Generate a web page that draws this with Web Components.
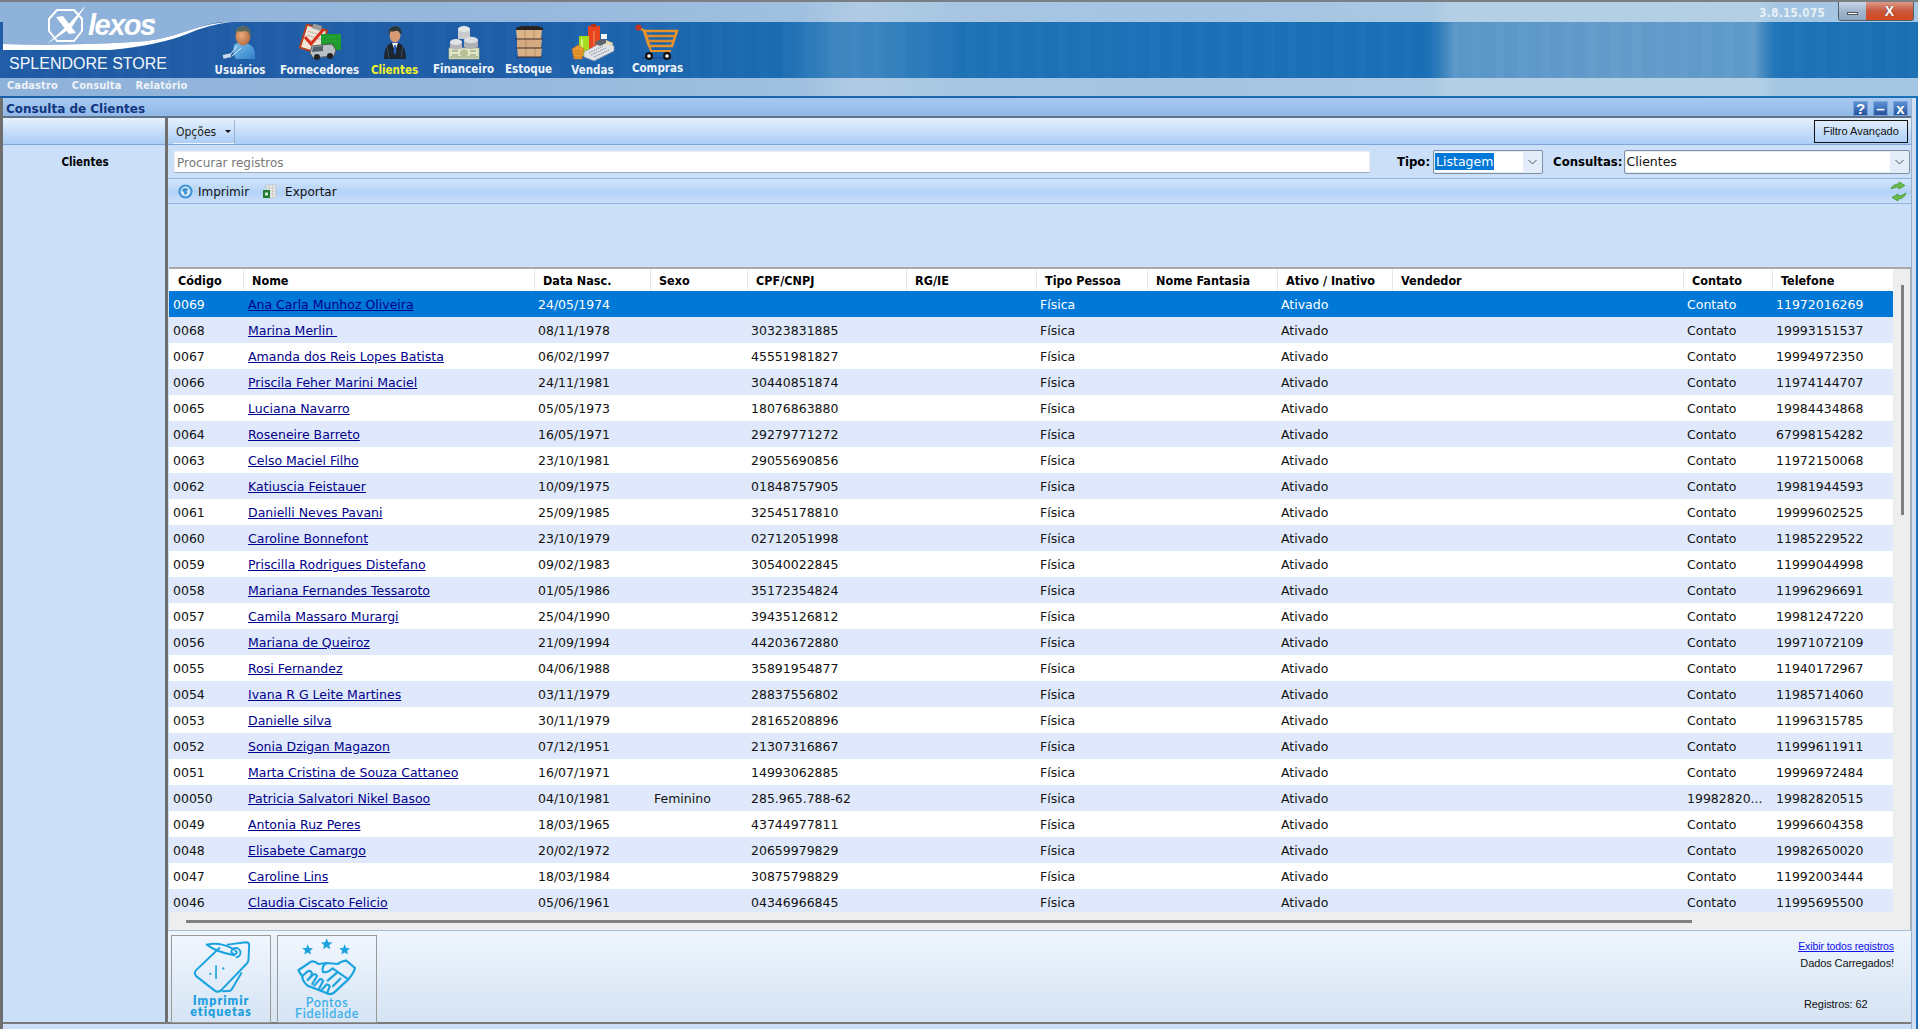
<!DOCTYPE html>
<html lang="pt-BR">
<head>
<meta charset="utf-8">
<title>Consulta de Clientes</title>
<style>
  html, body { margin: 0; padding: 0; background: #cbdff8; overflow: hidden; }
</style>
</head>
<body>
<lexos-app>
  <lexos-header slot="header" version="3.8.15.075" store="SPLENDORE STORE">
    <nav-item label="Usuários" width="80">
      <svg width="36" height="37" viewBox="0 0 36 37">
        <defs>
          <linearGradient id="uShirt" x1="0" y1="0" x2="1" y2="1"><stop offset="0" stop-color="#7cc0ee"/><stop offset="1" stop-color="#2f7fc6"/></linearGradient>
          <radialGradient id="uSkin" cx=".4" cy=".45" r=".7"><stop offset="0" stop-color="#eeab7c"/><stop offset="1" stop-color="#a8623a"/></radialGradient>
        </defs>
        <path d="M12 21 Q15 18 24 19 Q32 21 33 29 L33 35 L14 35 Q10 30 12 21Z" fill="url(#uShirt)"/>
        <ellipse cx="21" cy="12" rx="7.5" ry="9.5" fill="url(#uSkin)"/>
        <path d="M13 11 Q13 2 21 2 Q29 2 29 11 L28 13 Q27 7 23 7 Q17 8 15 7 Q14 9 14 13Z" fill="#586860"/>
        <path d="M15 22 L8 31 M19 24 L10 32" stroke="#dfeaf5" stroke-width="1"/>
        <rect x="1" y="30" width="8" height="4" fill="#c9d8e6" transform="rotate(-12 5 32)"/>
      </svg>
    </nav-item>
    <nav-item label="Fornecedores" width="79">
      <svg width="42" height="37" viewBox="0 0 42 37">
        <g transform="rotate(17 14 15)">
          <rect x="4" y="3" width="21" height="24" fill="#f0e6d8" stroke="#b8401c" stroke-width="2"/>
          <rect x="10" y="0" width="9" height="5" fill="#9a9a9a"/>
          <path d="M7 9h15M7 13h15M7 17h10" stroke="#c8b8a8"/>
        </g>
        <rect x="22" y="10" width="20" height="16" fill="#1f9a2e"/>
        <path d="M24 13h16M24 17h16" stroke="#3ec24c" stroke-dasharray="1 2"/>
        <path d="M6 13 L12 20 L24 6" fill="none" stroke="#d8301c" stroke-width="3"/>
        <path d="M13 22 L33 20 L37 26 L35 32 L14 34 L11 29Z" fill="#b9c0c6" stroke="#555"/>
        <path d="M14 23 L24 22 L24 27 L13 28Z" fill="#50606c"/>
        <circle cx="18" cy="33" r="3" fill="#222"/><circle cx="31" cy="32" r="3" fill="#222"/>
      </svg>
    </nav-item>
    <nav-item label="Clientes" width="71" active>
      <svg width="24" height="37" viewBox="0 0 24 37">
        <path d="M1 35 Q1 22 8 19 L16 19 Q23 22 23 35Z" fill="#1c2630"/>
        <path d="M9 19 L12 27 L15 19Z" fill="#f2f2f2"/>
        <path d="M11.2 21 L12.8 21 L13.4 28 L12 31 L10.6 28Z" fill="#2a62c0"/>
        <ellipse cx="12" cy="11" rx="5.5" ry="7.5" fill="#d89a72"/>
        <path d="M5.5 9 Q6 2 13 2 Q19 3 18.5 10 L17 10 Q16 6 12 7 Q9 8 7 7 L7 11Z" fill="#2e3838"/>
        <path d="M4 22 L6 34 M20 22 L18 34" stroke="#3d4a56"/>
      </svg>
    </nav-item>
    <nav-item label="Financeiro" width="67" offset="-1">
      <svg width="32" height="37" viewBox="0 0 32 37">
        <rect x="1" y="24" width="30" height="11" fill="#e4e6ca" stroke="#a8ac8a" stroke-width=".7"/>
        <path d="M2 33h28" stroke="#8aa070"/>
        <ellipse cx="16" cy="29" rx="4" ry="3.5" fill="#b6bf94"/>
        <path d="M4 27h6M22 27h6M4 31h6M22 31h6" stroke="#7f9568"/>
        <path d="M10 5 Q16 1 22 5 L22 15 L10 15Z" fill="#c8cacd"/>
        <ellipse cx="16" cy="5" rx="6" ry="3" fill="#e4e5e8"/>
        <path d="M2 18 Q8 13 14 18 L14 24 Q8 27 2 24Z" fill="#b4b6ba"/>
        <ellipse cx="8" cy="18" rx="6" ry="3" fill="#e2e3e6"/>
        <path d="M16 16 Q23 11 30 16 L30 23 Q23 27 16 23Z" fill="#aeb0b4"/>
        <ellipse cx="23" cy="16" rx="7" ry="3.2" fill="#dcdde0"/>
      </svg>
    </nav-item>
    <nav-item label="Estoque" width="63" offset="-1">
      <svg width="30" height="37" viewBox="0 0 30 37">
        <path d="M2 4 L7 2 L24 2 L29 4 L29 6 L2 6Z" fill="#26221e"/>
        <path d="M2 6 H28 L27 15 H3Z" fill="#dcb48a"/>
        <path d="M3 15 H28 L27 24 H3Z" fill="#d6aa80"/>
        <path d="M3 24 H28 L27 33 H4Z" fill="#dab088"/>
        <path d="M11 6v9M20 6v9M12 15v9M12 24v9M21 24v9" stroke="#a88458" stroke-width=".7"/>
        <path d="M1 15 H29 M2 24 H28 M3 33 H28" stroke="#3a2c24" stroke-width="1.1"/>
      </svg>
    </nav-item>
    <nav-item label="Vendas" width="65">
      <svg width="45" height="37" viewBox="0 0 45 37">
        <rect x="18" y="2" width="12" height="24" fill="#e8441e"/>
        <rect x="21" y="0" width="5" height="3" fill="#b8301a"/>
        <path d="M24 7v14" stroke="#f59a58"/>
        <rect x="9" y="12" width="10" height="20" rx="1" fill="#a6dc1e"/>
        <path d="M12 15v14" stroke="#d8f080" stroke-width="2"/>
        <path d="M2 25 L8 21 L14 25 L12 35 L4 35Z" fill="#e89a30" stroke="#b86c18" stroke-width=".6"/>
        <path d="M4 27h8M4 30h8M4 33h8" stroke="#c87e20"/>
        <path d="M14 28 L34 17 L44 22 L44 27 L24 37 L14 33Z" fill="#dfe2e6" stroke="#8c9096" stroke-width=".6"/>
        <path d="M24 19 L32 14 L38 18 L30 22Z" fill="#5e646c"/>
        <rect x="31" y="10" width="6" height="5" fill="#f4f4f4"/>
        <path d="M19 29 L33 22 M21 31 L36 24 M24 33 L39 26" stroke="#8c9096" stroke-dasharray="1.5 1"/>
        <path d="M36 16 L43 19 L42 22 L36 20Z" fill="#e8d8a8"/>
      </svg>
    </nav-item>
    <nav-item label="Compras" width="65" offset="-2" shift="-1">
      <svg width="44" height="37" viewBox="0 0 44 37">
        <path d="M4 4 L10 7 L16 27 L36 27" fill="none" stroke="#e8932c" stroke-width="2"/>
        <path d="M9 7 H42 L37 22 H14Z" fill="none" stroke="#e8932c" stroke-width="2.5"/>
        <path d="M11 12 H40 M13 17 H38" stroke="#e08a28" stroke-width="2.5"/>
        <circle cx="3.5" cy="3.5" r="3" fill="#c8341c"/>
        <path d="M6 34 H38" stroke="#2a4a96" stroke-width="1.5"/>
        <circle cx="14" cy="32" r="4" fill="#111"/><circle cx="14" cy="32" r="1.8" fill="#fff"/>
        <circle cx="32" cy="32" r="4" fill="#111"/><circle cx="32" cy="32" r="1.8" fill="#fff"/>
      </svg>
    </nav-item>
  </lexos-header>
  <client-window slot="window" title="Consulta de Clientes"></client-window>
</lexos-app>

<script>
const UI_FONT = `"DejaVu Sans Condensed", "Liberation Sans", sans-serif`;
const GRID_FONT = `"DejaVu Sans", Verdana, sans-serif`;
const COLS = '74px 291px 116px 97px 159px 130px 111px 130px 115px 291px 89px 121px';

class LexosApp extends HTMLElement {
  constructor() {
    super();
    this.attachShadow({ mode: 'open' });
    this.shadowRoot.innerHTML = `
      <style>
        :host {
          display: flex;
          flex-direction: column;
          width: 1918px;
          height: 1029px;
          overflow: hidden;
          background: #cbdff8;
        }
      </style>
      <slot name="header"></slot>
      <slot name="window"></slot>
    `;
  }
}

class NavItem extends HTMLElement {
  constructor() {
    super();
    this.attachShadow({ mode: 'open' });
  }

  connectedCallback() {
    const active = this.hasAttribute('active');
    const offset = this.getAttribute('offset') || 0;
    this.shadowRoot.innerHTML = `
      <style>
        :host {
          display: flex;
          flex-direction: column;
          align-items: center;
          width: ${this.getAttribute('width')}px;
          flex: none;
        }
        .icon {
          height: 37px;
          display: flex;
          justify-content: center;
          align-items: flex-start;
          margin-top: 2px;
          margin-left: ${this.getAttribute('shift') || 0}px;
        }
        span {
          margin-top: ${2 + Number(offset)}px;
          font: bold 11.5px/14px ${UI_FONT};
          color: ${active ? '#f4f42a' : '#eef3f8'};
          white-space: nowrap;
        }
      </style>
      <div class="icon"><slot></slot></div>
      <span>${this.getAttribute('label')}</span>
    `;
  }
}

class LexosHeader extends HTMLElement {
  constructor() {
    super();
    this.attachShadow({ mode: 'open' });
  }

  connectedCallback() {
    const light = 'linear-gradient(90deg, #8fb2da 0, #97b8dc 500px, #a0c0e0 800px, #b0cce4 860px, #a8c6e2 950px, #a4c4e2 1200px, #a9c8e3 1430px, #b4d0e7 1450px, #b2cfe6 1760px, #a6c7e3 1775px, #a4c6e3 100%)';
    this.shadowRoot.innerHTML = `
      <style>
        :host { display: block; position: relative; height: 98px; flex: none; }
        .top {
          height: 20px;
          border-top: 2px solid #7b7f84;
          background: ${light};
          display: flex;
          justify-content: flex-end;
          align-items: flex-start;
        }
        .version {
          font: bold 11.5px/20px ${UI_FONT};
          letter-spacing: .35px;
          color: #e8f0f7;
          margin: 1px 13px 0 0;
        }
        .winbtns {
          display: flex;
          height: 18px;
          margin-right: 4px;
          border: 1px solid #50606f;
          border-top: none;
          border-radius: 0 0 3px 3px;
          overflow: hidden;
        }
        .winbtns div { display: flex; align-items: center; justify-content: center; }
        .min { width: 27px; background: linear-gradient(#c8d6e6, #a2b6cc 50%, #8ea6c2); }
        .min i { width: 11px; height: 3px; background: #fff; border: 1px solid #555; box-sizing: border-box; margin-top: 4px; }
        .close { width: 47px; background: linear-gradient(#dc9a88, #c9573c 50%, #d8481c); color: #fff; font: bold 14px/14px "Liberation Sans", sans-serif; text-shadow: 0 0 1px #333; }
        .blue {
          height: 56px;
          background:
            repeating-linear-gradient(90deg, rgba(255,255,255,.012) 0 9px, rgba(0,0,0,.01) 9px 23px),
            linear-gradient(90deg, #1f5ca6 0, #1f5fa9 500px, #1a6cb3 780px, #4088c2 840px, #3a84c0 880px, #1f72b8 960px, #1a70b6 1430px, #5b98c9 1455px, #649dcc 1620px, #5f9bca 1755px, #1f74b8 1775px, #1a70b5 100%);
          display: flex;
          padding-left: 200px;
          box-sizing: border-box;
        }
        .menu {
          height: 18px;
          background: ${light};
          display: flex;
          gap: 14px;
          padding-left: 7px;
          font: bold 11px/15px ${UI_FONT};
          letter-spacing: .1px;
          color: #eef3f8;
        }
        .rule { height: 2px; background: linear-gradient(90deg, #1d5ea8, #1a70b6); }
        .swoosh { position: absolute; left: 0; top: 0; }
        .lexos {
          position: absolute;
          left: 88px;
          top: 7px;
          font: italic bold 29px/36px "Liberation Sans", sans-serif;
          letter-spacing: -1.5px;
          color: #fff;
        }
        .reg { position: absolute; left: 151px; top: 17px; font: 6px/8px "Liberation Sans", sans-serif; color: #fff; }
        .store {
          position: absolute;
          left: 9px;
          top: 53px;
          font: 16px/22px "Liberation Sans", sans-serif;
          color: #f2f6fb;
          white-space: nowrap;
        }
      </style>
      <div class="top">
        <div class="version">${this.getAttribute('version')}</div>
        <div class="winbtns">
          <div class="min"><i></i></div>
          <div class="close">X</div>
        </div>
      </div>
      <div class="blue"><slot></slot></div>
      <div class="menu"><span>Cadastro</span><span>Consulta</span><span>Relatório</span></div>
      <div class="rule"></div>
      <svg class="swoosh" width="240" height="54" viewBox="0 0 240 54">
        <path d="M3 2 H240 V21 H230 Q213 22 187 31 Q160 41 133 42 Q60 46 3 44Z" fill="#8fb2da"/>
        <path d="M3 44 Q60 46 133 42 Q160 41 187 31 Q213 22 232 22 Q210 24 187 34 Q160 45 110 50 H3Z" fill="#fff"/>
        <path d="M57 10 L74 10 L82 19 L82 31 L74 41 L57 41 L49 31 L49 19Z" fill="none" stroke="#fff" stroke-width="2" stroke-linejoin="round"/>
        <path d="M47 44 L68 25 L86 5 L72 27 L62 34Z" fill="#fff"/>
        <path d="M56 17 L63 16 L76 33 L69 34Z" fill="#fff"/>
      </svg>
      <div class="lexos">lexos</div>
      <div class="reg">®</div>
      <div class="store">${this.getAttribute('store')}</div>
    `;
  }
}

class LxCombo extends HTMLElement {
  constructor() {
    super();
    this.attachShadow({ mode: 'open' });
  }

  connectedCallback() {
    this.shadowRoot.innerHTML = `
      <style>
        :host {
          display: flex;
          align-items: center;
          height: 24px;
          box-sizing: border-box;
          border: 1px solid #7f90a6;
          border-radius: 2px;
          background: #e3edf9;
          font: 12.5px/18px ${GRID_FONT};
          color: #111;
        }
        .val { flex: 1; height: 20px; background: #fff; margin-left: 1px; line-height: 20px; }
        .val.sel span { background: #0078d7; color: #fff; display: inline-block; height: 17px; line-height: 17px; padding-left: 1px; padding-right: 1px; margin-top: 1px; vertical-align: top; }
        .arrow { width: 19px; display: flex; justify-content: center; }
      </style>
      <div class="val ${this.hasAttribute('selected') ? 'sel' : ''}"><span>${this.getAttribute('value')}</span></div>
      <div class="arrow"><svg width="9" height="6" viewBox="0 0 9 6"><path d="M.5 1 L4.5 5 L8.5 1" fill="none" stroke="#556" stroke-width="1"/></svg></div>
    `;
  }
}

class ClientRow extends HTMLElement {
  constructor() {
    super();
    this.attachShadow({ mode: 'open' });
  }

  set data(d) {
    const sel = this.hasAttribute('selected');
    this.shadowRoot.innerHTML = `
      <style>
        :host {
          display: grid;
          grid-template-columns: ${COLS};
          height: 26px;
          flex: none;
          background: ${sel ? '#0078d7' : this.hasAttribute('alt') ? '#e0e9fb' : '#fff'};
          color: ${sel ? '#fff' : '#111'};
          font: 12.5px/27px ${GRID_FONT};
        }
        div { padding-left: 4px; white-space: pre; overflow: hidden; height: 26px; }
        a { color: #00008b; text-decoration: underline; margin-left: 1px; }
      </style>
      <div>${d.cod}</div>
      <div><a>${d.nome}</a></div>
      <div>${d.nasc}</div>
      <div>${d.sexo || ''}</div>
      <div>${d.cpf}</div>
      <div></div>
      <div>Física</div>
      <div></div>
      <div>Ativado</div>
      <div></div>
      <div>${d.contato || 'Contato'}</div>
      <div>${d.fone}</div>
    `;
  }
}

class ClientGrid extends HTMLElement {
  constructor() {
    super();
    this.attachShadow({ mode: 'open' });
  }

  connectedCallback() {
    const heads = ['Código', 'Nome', 'Data Nasc.', 'Sexo', 'CPF/CNPJ', 'RG/IE', 'Tipo Pessoa', 'Nome Fantasia', 'Ativo / Inativo', 'Vendedor', 'Contato', 'Telefone'];
    this.shadowRoot.innerHTML = `
      <style>
        :host {
          display: grid;
          grid-template-columns: 1724px 18px;
          grid-template-rows: minmax(0, 1fr) 18px;
          flex: 1;
          min-height: 0;
          border-top: 2px solid #a9a9a9;
          margin-left: 1px;
          background: #eee;
        }
        .table { grid-column: 1; grid-row: 1; display: flex; flex-direction: column; overflow: hidden; min-height: 0; }
        .head {
          display: grid;
          grid-template-columns: ${COLS};
          height: 22px;
          flex: none;
          background: #fff;
          font: bold 12.5px/23px ${UI_FONT};
          color: #000;
        }
        .head div { padding-left: 8px; border-left: 1px solid #e6e6e6; }
        .head div:first-child { border-left: 1px solid #fff; }
        .vbar { grid-column: 2; grid-row: 1 / 3; border-right: 1px solid #a9a9a9; padding: 16px 0 0 8px; box-sizing: border-box; }
        .vbar i { display: block; width: 3px; height: 230px; background: #808080; }
        .hbar { grid-column: 1; grid-row: 2; padding: 8px 0 0 17px; box-sizing: border-box; }
        .hbar i { display: block; width: 1506px; height: 3px; background: #808080; }
      </style>
      <div class="table">
        <div class="head">${heads.map(h => `<div>${h}</div>`).join('')}</div>
        <div id="rows"></div>
      </div>
      <div class="vbar"><i></i></div>
      <div class="hbar"><i></i></div>
    `;
    const rows = this.shadowRoot.getElementById('rows');
    CLIENTS.forEach((c, i) => {
      const row = document.createElement('client-row');
      if (i === 0) row.setAttribute('selected', '');
      else if (i % 2) row.setAttribute('alt', '');
      row.data = c;
      rows.appendChild(row);
    });
  }
}

const star = (cx, cy, r) => {
  let pts = '';
  for (let i = 0; i < 10; i++) {
    const a = -Math.PI / 2 + i * Math.PI / 5;
    const rad = i % 2 ? r * 0.45 : r;
    pts += `${(cx + rad * Math.cos(a)).toFixed(1)},${(cy + rad * Math.sin(a)).toFixed(1)} `;
  }
  return `<polygon points="${pts}" fill="#1ba3e0"/>`;
};

class ActionButton extends HTMLElement {
  constructor() {
    super();
    this.attachShadow({ mode: 'open' });
  }

  connectedCallback() {
    const strong = this.hasAttribute('strong');
    this.shadowRoot.innerHTML = `
      <style>
        :host {
          display: flex;
          flex-direction: column;
          align-items: center;
          width: 100px;
          height: 88px;
          box-sizing: border-box;
          border: 1px solid #808080;
          outline: 1px solid #9a9a9a;
          outline-offset: -1px;
          background: linear-gradient(#f0f6fe, #d6e4f4);
          flex: none;
        }
        .art { height: 58px; margin-top: 2px; }
        span {
          font: ${strong ? '800' : '600'} 12.5px/11px Lato, "Open Sans", sans-serif;
          letter-spacing: ${strong ? '1px' : '.7px'};
          color: ${strong ? '#1f9fe0' : '#3cb0ea'};
          text-align: center;
          margin-top: ${strong ? -1 : 1}px;
        }
      </style>
      <div class="art"><slot></slot></div>
      <span>${this.getAttribute('line1')}<br>${this.getAttribute('line2')}</span>
    `;
  }
}

class ClientWindow extends HTMLElement {
  constructor() {
    super();
    this.attachShadow({ mode: 'open' });
  }

  connectedCallback() {
    this.shadowRoot.innerHTML = `
      <style>
        :host {
          display: flex;
          flex-direction: column;
          flex: 1;
          min-height: 0;
          border-left: 3px solid #6f6f6f;
          background: linear-gradient(90deg, #cfe0f6 1913px, #2070b8 1913px);
          font-family: ${UI_FONT};
        }
        .frame { display: flex; flex-direction: column; flex: 1; min-height: 0; width: 1909px; padding-bottom: 5px; box-sizing: border-box; background: #cbdff8; border-right: 1px solid #9cb2cc; }
        .title {
          display: flex;
          align-items: center;
          padding: 3px 3px 0 3px;
          box-sizing: border-box;
          background: linear-gradient(#a8c9ef, #8fb9e9);
          border-bottom: 2px solid #5f7488;
          flex: none;
          height: 20px;
        }
        .title b {
          flex: 1;
          font: bold 12px/16px ${GRID_FONT};
          color: #12357f;
        }
        .tb {
          width: 15px;
          height: 15px;
          margin-left: 5px;
          border-radius: 2px;
          background: linear-gradient(#5f94d8, #1f4e96);
          box-shadow: inset 0 0 0 1px #7ba4dc;
          color: #fff;
          text-align: center;
          font: bold 15px/15px "Liberation Sans", sans-serif;
        }
        .cols { display: flex; flex: 1; min-height: 0; border-bottom: 2px solid #7a7a7a; }
        .side { width: 165px; flex: none; box-sizing: border-box; border-right: 3px solid #6f6f6f; display: flex; flex-direction: column; }
        .side .band { height: 27px; background: linear-gradient(#e6f1fd, #aacdf6); border-bottom: 1px solid #7ea6d8; box-sizing: border-box; }
        .side .name { text-align: center; font: bold 11.5px/16px ${UI_FONT}; color: #000; margin-top: 9px; padding-left: 2px; }
        .main { flex: 1; min-width: 0; display: flex; flex-direction: column; }
        .tools {
          display: flex;
          align-items: center;
          justify-content: space-between;
          height: 27px;
          flex: none;
          box-sizing: border-box;
          padding: 1px 3px 0 5px;
          background: linear-gradient(#e6f1fd, #aacdf6);
          border-bottom: 1px solid #7ea6d8;
        }
        .opcoes {
          display: flex;
          align-items: center;
          gap: 9px;
          width: 62px;
          height: 24px;
          box-sizing: border-box;
          padding: 1px 0 0 3px;
          border-right: 1px solid #9bb3d0;
          border-bottom: 1px solid #eef5ff;
          font: 12px/16px ${UI_FONT};
          color: #222;
        }
        .opcoes i { width: 0; height: 0; border: 3px solid transparent; border-top: 3px solid #111; border-bottom: none; }
        .filtro {
          width: 94px;
          height: 23px;
          box-sizing: border-box;
          border: 1px solid #111;
          font: 11px/21px "Liberation Sans", sans-serif;
          text-align: center;
          color: #111;
        }
        .search { display: flex; align-items: center; height: 33px; flex: none; padding-left: 6px; box-sizing: border-box; }
        .search .box {
          width: 1196px;
          height: 22px;
          box-sizing: border-box;
          background: #fff;
          border: 1px solid #e6edf6;
          border-bottom-color: #9ab;
          font: 12px/22px ${GRID_FONT};
          color: #777;
          padding-left: 2px;
          margin-right: 27px;
        }
        .search b { font: bold 13px/16px ${UI_FONT}; color: #000; }
        lx-combo { margin-left: 3px; }
        .print {
          display: flex;
          align-items: center;
          height: 26px;
          flex: none;
          box-sizing: border-box;
          padding: 1px 4px 0 10px;
          background: linear-gradient(#d3e5fa, #b3d2f7 55%, #cbe0fa);
          border-top: 1px solid #8fb2de;
          border-bottom: 1px solid #8fb2de;
          font: 12px/16px ${GRID_FONT};
          color: #111;
        }
        .print span { margin: 0 13px 0 5px; }
        .print svg.refresh { margin-left: auto; }
        .spacer { height: 63px; flex: none; }
        .foot {
          display: flex;
          align-items: stretch;
          height: 92px;
          flex: none;
          box-sizing: border-box;
          padding: 4px 0 0 3px;
          gap: 6px;
          background: linear-gradient(#eef5fd, #d5e3f3);
          border-top: 1px solid #a9bdd6;
        }
        .status {
          margin-left: auto;
          width: 115px;
          font: 11px/14px "Liberation Sans", sans-serif;
          letter-spacing: -.1px;
          color: #111;
          display: flex;
          flex-direction: column;
          padding-right: 17px;
          box-sizing: border-box;
        }
        .status a { font-size: 10.5px; color: #1010ee; text-decoration: underline; margin-top: 4px; white-space: nowrap; align-self: flex-end; }
        .status .ok { margin-top: 3px; align-self: flex-end; white-space: nowrap; }
        .status .reg { margin-top: 27px; margin-left: 8px; white-space: nowrap; }
      </style>
      <div class="frame">
        <div class="title">
          <b>${this.getAttribute('title')}</b>
          <div class="tb">?</div><div class="tb">–</div><div class="tb">x</div>
        </div>
        <div class="cols">
          <div class="side">
            <div class="band"></div>
            <div class="name">Clientes</div>
          </div>
          <div class="main">
            <div class="tools">
              <div class="opcoes">Opções <i></i></div>
              <div class="filtro">Filtro Avançado</div>
            </div>
            <div class="search">
              <div class="box">Procurar registros</div>
              <b>Tipo:</b>
              <lx-combo value="Listagem" selected style="width:110px"></lx-combo>
              <b style="margin-left:10px">Consultas:</b>
              <lx-combo value="Clientes" style="width:286px;margin-left:2px"></lx-combo>
            </div>
            <div class="print">
              <svg width="15" height="15" viewBox="0 0 15 15"><circle cx="7.5" cy="7.5" r="6" fill="#dcebfa" stroke="#3f93d8" stroke-width="2.2"/><path d="M5 4.5 Q9 3 10.5 6 L8.5 7 L9.5 9.5 L6.5 11 L6 8 L4 7Z" fill="#3f93d8"/></svg>
              <span>Imprimir</span>
              <svg width="15" height="15" viewBox="0 0 15 15"><rect x="4" y="1" width="10" height="13" fill="#e8ebe8" stroke="#b8bcb8" stroke-width=".6"/><path d="M4 4h10M4 7h10M4 10h10M7 1v13M10.5 1v13" stroke="#b8bcb8" stroke-width=".6"/><rect x="1" y="6" width="7" height="8" fill="#1f7a32"/><rect x="3" y="8.5" width="3" height="3" fill="#cfe8d0"/></svg>
              <span style="margin-left:8px">Exportar</span>
              <svg class="refresh" width="17" height="21" viewBox="0 0 17 21"><path d="M1 8 Q3 3 9 3 L9 1 L15 4.5 L9 8 L9 6 Q5 6 1 8Z" fill="#6cc04a" stroke="#3a8a2a" stroke-width=".7"/><path d="M16 12 Q14 18 8 18 L8 20 L2 16.5 L8 13 L8 15 Q12 15 16 12Z" fill="#6cc04a" stroke="#3a8a2a" stroke-width=".7"/></svg>
            </div>
            <div class="spacer"></div>
            <client-grid></client-grid>
            <div class="foot">
              <action-button line1="Imprimir" line2="etiquetas" strong>
                <svg width="70" height="58" viewBox="60 20 210 175" fill="none" stroke="#1ba3e0" stroke-width="6" stroke-linecap="round" stroke-linejoin="round">
                  <path d="M185 40 L240 33 Q250 33 250 42 L248 85 Q248 92 243 97 L165 178 Q155 186 145 178 L90 135 Q82 125 90 117 L160 50"/>
                  <path d="M226 126 L198 174 Q194 181 186 180 L170 181"/>
                  <path d="M122 40 Q150 62 205 72 M122 40 Q160 30 205 54"/>
                  <path d="M212 78 A14 14 0 1 0 196 62 Q200 72 210 68 Q216 62 208 58"/>
                  <path d="M150 104 V142" stroke-width="5"/>
                  <circle cx="133" cy="128" r="3.5" fill="#1ba3e0" stroke="none"/>
                  <circle cx="172" cy="112" r="3.5" fill="#1ba3e0" stroke="none"/>
                </svg>
              </action-button>
              <action-button line1="Pontos" line2="Fidelidade">
                <svg width="62" height="60" viewBox="395 22 186 180" fill="none" stroke="#1ba3e0" stroke-width="6.5" stroke-linecap="round" stroke-linejoin="round">
                  <g stroke="none">${star(430, 58, 17)}${star(487, 41, 18)}${star(541, 58, 17)}</g>
                  <path d="M403 118 L440 93 Q450 90 462 100 L488 97 M402 118 Q406 128 414 136"/>
                  <path d="M572 112 L546 90 Q535 90 520 100 L488 97 Q470 105 476 124 Q490 128 505 113 L552 146"/>
                  <path d="M572 112 Q568 128 552 146 L510 185 Q500 194 488 188 L430 165 Q412 150 414 136"/>
                  <path d="M414 136 L430 122 Q438 118 442 126 Q446 132 430 148 M430 148 L446 132 Q454 128 458 136 L444 160 M450 165 L466 146 Q474 144 476 152 L464 174 M470 180 L486 162 Q494 160 496 168 L488 188"/>
                  <path d="M506 166 L528 144 M490 150 L518 126"/>
                </svg>
              </action-button>
              <div class="status">
                <a>Exibir todos registros</a>
                <div class="ok">Dados Carregados!</div>
                <div class="reg">Registros: 62</div>
              </div>
            </div>
          </div>
        </div>
      </div>
    `;
  }
}

const CLIENTS = [
  { cod: '0069', nome: 'Ana Carla Munhoz Oliveira', nasc: '24/05/1974', cpf: '', fone: '11972016269' },
  { cod: '0068', nome: 'Marina Merlin ', nasc: '08/11/1978', cpf: '30323831885', fone: '19993151537' },
  { cod: '0067', nome: 'Amanda dos Reis Lopes Batista', nasc: '06/02/1997', cpf: '45551981827', fone: '19994972350' },
  { cod: '0066', nome: 'Priscila Feher Marini Maciel', nasc: '24/11/1981', cpf: '30440851874', fone: '11974144707' },
  { cod: '0065', nome: 'Luciana Navarro', nasc: '05/05/1973', cpf: '18076863880', fone: '19984434868' },
  { cod: '0064', nome: 'Roseneire Barreto', nasc: '16/05/1971', cpf: '29279771272', fone: '67998154282' },
  { cod: '0063', nome: 'Celso Maciel Filho', nasc: '23/10/1981', cpf: '29055690856', fone: '11972150068' },
  { cod: '0062', nome: 'Katiuscia Feistauer', nasc: '10/09/1975', cpf: '01848757905', fone: '19981944593' },
  { cod: '0061', nome: 'Danielli Neves Pavani', nasc: '25/09/1985', cpf: '32545178810', fone: '19999602525' },
  { cod: '0060', nome: 'Caroline Bonnefont', nasc: '23/10/1979', cpf: '02712051998', fone: '11985229522' },
  { cod: '0059', nome: 'Priscilla Rodrigues Distefano', nasc: '09/02/1983', cpf: '30540022845', fone: '11999044998' },
  { cod: '0058', nome: 'Mariana Fernandes Tessaroto', nasc: '01/05/1986', cpf: '35172354824', fone: '11996296691' },
  { cod: '0057', nome: 'Camila Massaro Murargi', nasc: '25/04/1990', cpf: '39435126812', fone: '19981247220' },
  { cod: '0056', nome: 'Mariana de Queiroz', nasc: '21/09/1994', cpf: '44203672880', fone: '19971072109' },
  { cod: '0055', nome: 'Rosi Fernandez', nasc: '04/06/1988', cpf: '35891954877', fone: '11940172967' },
  { cod: '0054', nome: 'Ivana R G Leite Martines', nasc: '03/11/1979', cpf: '28837556802', fone: '11985714060' },
  { cod: '0053', nome: 'Danielle silva', nasc: '30/11/1979', cpf: '28165208896', fone: '11996315785' },
  { cod: '0052', nome: 'Sonia Dzigan Magazon', nasc: '07/12/1951', cpf: '21307316867', fone: '11999611911' },
  { cod: '0051', nome: 'Marta Cristina de Souza Cattaneo', nasc: '16/07/1971', cpf: '14993062885', fone: '19996972484' },
  { cod: '00050', nome: 'Patricia Salvatori Nikel Basoo', nasc: '04/10/1981', sexo: 'Feminino', cpf: '285.965.788-62', contato: '19982820...', fone: '19982820515' },
  { cod: '0049', nome: 'Antonia Ruz Peres', nasc: '18/03/1965', cpf: '43744977811', fone: '19996604358' },
  { cod: '0048', nome: 'Elisabete Camargo', nasc: '20/02/1972', cpf: '20659979829', fone: '19982650020' },
  { cod: '0047', nome: 'Caroline Lins', nasc: '18/03/1984', cpf: '30875798829', fone: '11992003444' },
  { cod: '0046', nome: 'Claudia Ciscato Felicio', nasc: '05/06/1961', cpf: '04346966845', fone: '11995695500' }
];

customElements.define('nav-item', NavItem);
customElements.define('lexos-header', LexosHeader);
customElements.define('lx-combo', LxCombo);
customElements.define('client-row', ClientRow);
customElements.define('client-grid', ClientGrid);
customElements.define('action-button', ActionButton);
customElements.define('client-window', ClientWindow);
customElements.define('lexos-app', LexosApp);
</script>
</body>
</html>
